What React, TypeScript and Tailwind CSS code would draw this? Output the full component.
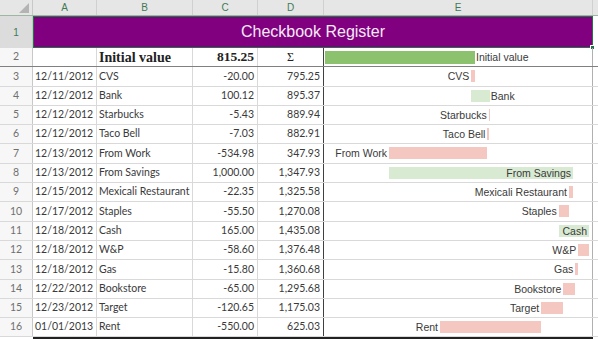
import React from 'react'

// scale for the waterfall column (E): 815.25 -> 150px
const X0 = 1
const SCALE = 150 / 815.25

interface Entry {
  date:    string
  name:    string
  amount:  string
  balance: string
  value:   number
  bal:     number
}

const ENTRIES: Entry[] = [
  { date: '12/11/2012', name: 'CVS',                amount: '-20.00',   balance: '795.25',   value: -20.0,   bal: 795.25 },
  { date: '12/12/2012', name: 'Bank',               amount: '100.12',   balance: '895.37',   value: 100.12,  bal: 895.37 },
  { date: '12/12/2012', name: 'Starbucks',          amount: '-5.43',    balance: '889.94',   value: -5.43,   bal: 889.94 },
  { date: '12/12/2012', name: 'Taco Bell',          amount: '-7.03',    balance: '882.91',   value: -7.03,   bal: 882.91 },
  { date: '12/13/2012', name: 'From Work',          amount: '-534.98',  balance: '347.93',   value: -534.98, bal: 347.93 },
  { date: '12/13/2012', name: 'From Savings',       amount: '1,000.00', balance: '1,347.93', value: 1000,    bal: 1347.93 },
  { date: '12/15/2012', name: 'Mexicali Restaurant', amount: '-22.35',  balance: '1,325.58', value: -22.35,  bal: 1325.58 },
  { date: '12/17/2012', name: 'Staples',            amount: '-55.50',   balance: '1,270.08', value: -55.5,   bal: 1270.08 },
  { date: '12/18/2012', name: 'Cash',               amount: '165.00',   balance: '1,435.08', value: 165,     bal: 1435.08 },
  { date: '12/18/2012', name: 'W&P',                amount: '-58.60',   balance: '1,376.48', value: -58.6,   bal: 1376.48 },
  { date: '12/18/2012', name: 'Gas',                amount: '-15.80',   balance: '1,360.68', value: -15.8,   bal: 1360.68 },
  { date: '12/22/2012', name: 'Bookstore',          amount: '-65.00',   balance: '1,295.68', value: -65,     bal: 1295.68 },
  { date: '12/23/2012', name: 'Target',             amount: '-120.65',  balance: '1,175.03', value: -120.65, bal: 1175.03 },
  { date: '01/01/2013', name: 'Rent',               amount: '-550.00',  balance: '625.03',   value: -550,    bal: 625.03 },
]

const COL_E = 269

function Bar({ name, value, bal }: { name: string; value: number; bal: number }) {
  const prev  = bal - value
  const lo    = Math.min(prev, bal)
  const hi    = Math.max(prev, bal)
  const left  = X0 + lo * SCALE
  const width = Math.max(1, (hi - lo) * SCALE)
  const right = left + width
  const pos   = value >= 0
  // positive labels sit right of the bar unless they'd run off the column
  const inside = pos && right + name.length * 6 > COL_E - 4

  return (
    <>
      <div
        className={`absolute top-[3px] h-[12px] ${pos ? 'bg-[#d9ead3]' : 'bg-[#f4c7c0]'}`}
        style={{ left, width }}
      />
      {pos && !inside && (
        <span className="absolute top-0 leading-[19px] pl-px" style={{ left: right }}>{name}</span>
      )}
      {(!pos || inside) && (
        <span
          className="absolute top-0 leading-[19px] pr-px text-right whitespace-nowrap"
          style={{ right: COL_E - (inside ? right : left) }}
        >
          {name}
        </span>
      )}
    </>
  )
}

export default function App() {
  const cell = 'h-full border-r border-[#d9d9d9] flex items-center'
  return (
    <div className="w-[598px] h-[339px] overflow-hidden bg-white text-[#3a3a3a] font-['Lato',sans-serif] text-[10.5px]">
      {/* column headers */}
      <div className="flex h-[16px] bg-[#e6e6e6] border-b border-[#9fb5a6] text-[10px] text-[#3e7a55] font-['Liberation_Sans',sans-serif]">
        <div className="w-[33px] h-full border-r border-[#c8c8c8] relative">
          <div className="absolute right-[3px] bottom-[2px] w-0 h-0 border-l-[10px] border-l-transparent border-b-[10px] border-b-[#b4b4b4]" />
        </div>
        {[['A', 64], ['B', 96], ['C', 65], ['D', 66], ['E', 269]].map(([l, w]) => (
          <div key={l} className="h-full border-r border-[#d0d0d0] flex items-center justify-center" style={{ width: w as number }}>{l}</div>
        ))}
        <div className="flex-1" />
      </div>

      {/* row 1 title */}
      <div className="flex h-[32px]">
        <div className="w-[33px] h-full bg-[#dcdcdc] border-r border-[#c8c8c8] flex items-center justify-center text-[10px] text-[#3e7a55] font-['Liberation_Sans',sans-serif]">1</div>
        <div className="w-[560px] h-full bg-[#800080] border border-[#217346] flex items-center justify-center text-[16px] text-[#f6eaf6] font-['Liberation_Sans',sans-serif] relative">
          Checkbook Register
          <div className="absolute -right-[3px] -bottom-[3px] w-[5px] h-[5px] bg-[#217346] border border-white" />
        </div>
        <div className="flex-1" />
      </div>

      {/* row 2 initial value */}
      <div className="flex h-[19.3px] border-b border-[#808080]">
        <div className="w-[33px] h-full bg-[#f7f7f7] border-r border-[#c8c8c8] flex items-center justify-center text-[#707070]">2</div>
        <div className={`${cell} w-[64px]`} />
        <div className={`${cell} w-[96px] pl-[2px] font-['Liberation_Serif',serif] font-bold text-[14px] text-[#222]`}>Initial value</div>
        <div className={`${cell} w-[65px] justify-end pr-[3px] font-['Liberation_Serif',serif] font-bold text-[13.5px] text-[#222]`}>815.25</div>
        <div className="h-full w-[66px] border-r border-[#404040] flex items-center justify-center font-['Liberation_Serif',serif] text-[12px] text-[#222]">Σ</div>
        <div className="h-full w-[269px] border-r border-[#b0b0b0] relative font-['Liberation_Sans',sans-serif] text-[10.5px]">
          <div className="absolute top-[3px] h-[13px] bg-[#8cc26e]" style={{ left: X0, width: 815.25 * SCALE }} />
          <span className="absolute top-0 leading-[19px] pl-px" style={{ left: X0 + 815.25 * SCALE }}>Initial value</span>
        </div>
        <div className="flex-1" />
      </div>

      {ENTRIES.map((e, i) => (
        <div key={i} className="flex h-[19.3px] border-b border-[#d9d9d9]">
          <div className="w-[33px] h-full bg-[#f7f7f7] border-r border-[#c8c8c8] flex items-center justify-center text-[#707070]">{i + 3}</div>
          <div className={`${cell} w-[64px] pl-[2px]`}>{e.date}</div>
          <div className={`${cell} w-[96px] pl-[2px] whitespace-nowrap`}>{e.name}</div>
          <div className={`${cell} w-[65px] justify-end pr-[3px]`}>{e.amount}</div>
          <div className="h-full w-[66px] border-r border-[#404040] flex items-center justify-end pr-[3px]">{e.balance}</div>
          <div className="h-full w-[269px] border-r border-[#b0b0b0] relative font-['Liberation_Sans',sans-serif] text-[10.5px]">
            <Bar name={e.name} value={e.value} bal={e.bal} />
          </div>
          <div className="flex-1" />
        </div>
      ))}
      <div className="ml-[33px] w-[560px] h-[2px] bg-[#222]" />
    </div>
  )
}
